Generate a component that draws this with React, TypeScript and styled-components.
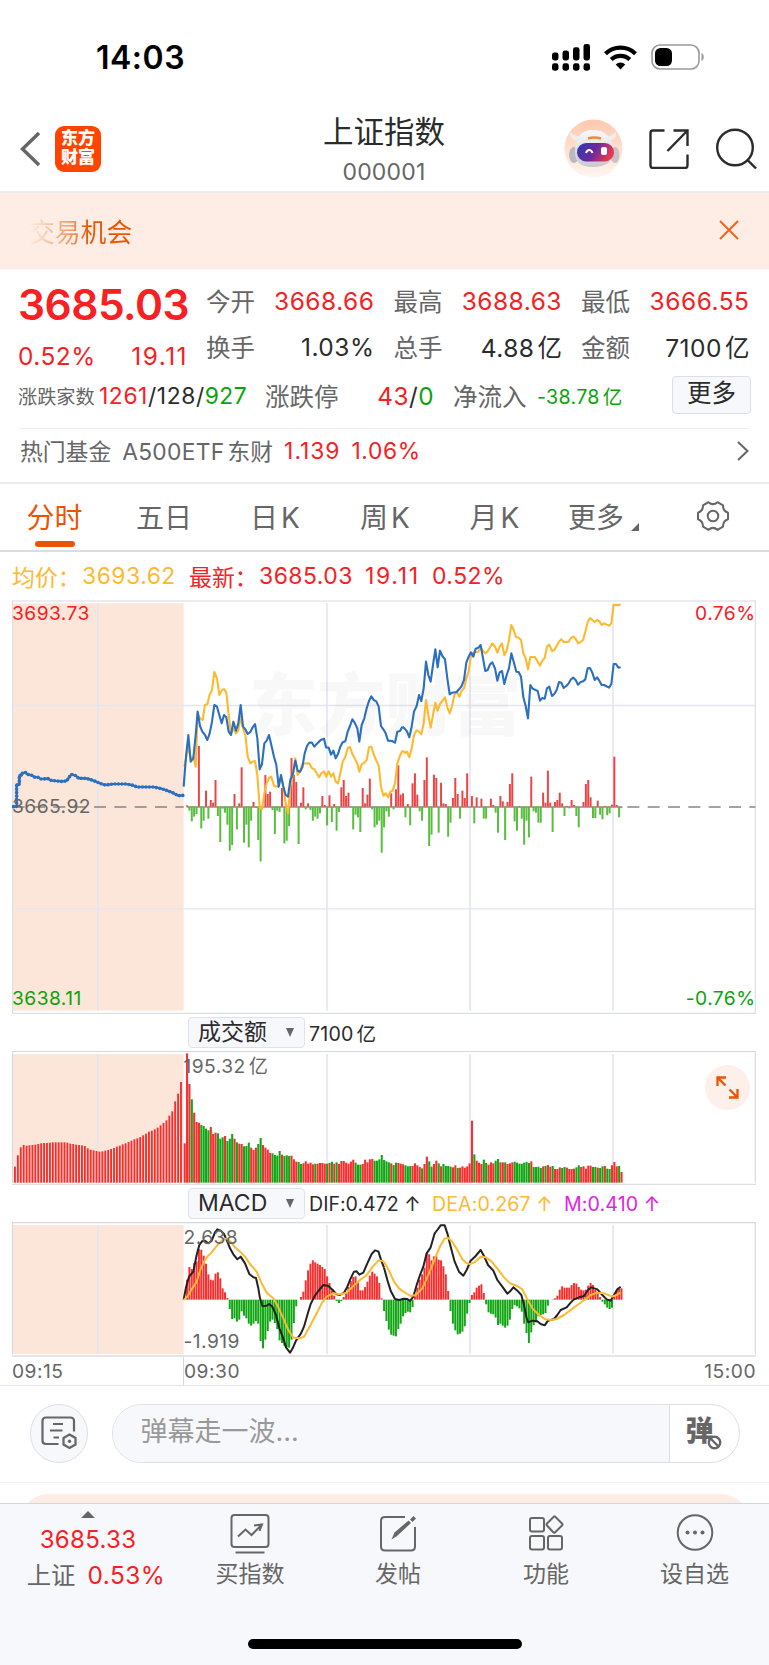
import React from 'react';
import styled, { createGlobalStyle } from 'styled-components';

const RED = '#f72023';
const GREEN = '#0ba30b';
const ORANGE = '#ea5504';
const GOLD = '#ffb92e';
const BLUE = '#2b6fc0';
const INK = '#2b2b2b';
const GREY = '#666';
const LINE = '#e3e6ee';
const PEACH = '#fce6da';

const Global = createGlobalStyle`
  * { box-sizing: border-box; }
  body {
    margin: 0;
    background: #fff;
    color: ${INK};
    font-family: Inter, "Noto Sans CJK SC", sans-serif;
    font-feature-settings: "calt" 0;
  }
`;

/* ---------- chart data: thirds of a pixel ---------- */

const SESSION_X = 551;
const STEP = 7.122;

const flow = [
  4, -12, -44, -30, -22, 182, -65, -42, 48, -36, 20, 12, 80, -28, -106, -6, -18, -54, -132, -115,
  38, -68, 10, 118, -108, -54, -122, -42, 14, -4, -100, -164, 0, 95, 38, 45, -10, -82, -12, -16,
  56, -110, -102, -58, 146, 96, 74, -112, 12, 58, -8, 10, -10, -42, -30, -36, -20, 32, 5, -56,
  34, -46, 8, -72, -16, 58, 80, 32, 42, -2, -68, -24, -32, -76, 56, 10, 36, 84, -8, -62,
  -54, -42, -138, -62, -14, -30, 40, -8, 52, 124, 36, 40, -32, 8, -56, 70, 100, 36, -14, -42,
  80, 148, -118, -84, 96, 86, -78, 72, 10, 8, -90, -48, 26, 86, 38, -36, 48, 26, 100, 0,
  32, -50, 28, 0, 24, -36, -36, 0, 24, 5, -18, -78, 32, 16, -100, 14, 68, 100, -44, -72,
  2, -36, -114, -42, -92, 90, -14, -18, -48, -48, 42, 12, 108, 12, -76, 14, 20, 42, 10, -28,
  2, -5, 20, 5, -28, -62, 0, 14, 68, 80, 28, -34, -34, 18, -24, -38, 2, -26, -20, 6,
  150, 5, -32, -4,
];

const auction = [
  500, 466, 442, 435, 437, 436, 435, 434, 432, 430, 429, 429, 428, 427, 427, 427, 427, 427, 428, 431,
  432, 434, 435, 436, 438, 445, 449, 451, 453, 455, 454, 452, 450, 447, 444, 440, 437, 433, 430, 426,
  422, 418, 415, 411, 406, 401, 395, 392, 388, 383, 376, 369, 361, 347, 334, 304, 281, 246,
];

const turnover = [
  430, 160, 252, -298, 338, 366, 368, -375, -378, -386, -391, 381, 402, 398, -400, -416, -412, 408, -423, -416,
  -402, 416, -427, 431, 432, -439, -438, -428, 443, 450, 443, -432, -414, 435, 443, 449, 459, -460, -465, -467,
  -453, 464, -468, -466, -468, 467, 478, 485, -486, -492, 490, 484, 491, 488, 493, -491, 491, 489, 489, 491,
  -491, 489, -485, 491, -487, 492, 483, 483, 488, 491, 485, 479, -488, -494, -494, 492, 479, 487, 478, 477,
  -482, -482, -478, -465, -480, -484, -487, 490, -495, -488, 489, 491, 493, -496, -499, -498, 498, 490, 496, 501,
  -505, 492, 470, -484, -500, 492, 482, -490, 499, -492, -498, -498, -500, 502, 496, -504, 503, 499, 503, 499,
  490, 362, -463, 482, 488, 492, -479, -489, 494, 487, 490, -482, -477, 487, 487, -487, 492, 490, 487, -485,
  -488, -491, -491, -488, -486, -489, 484, -501, -501, -500, -504, 499, -498, 495, 500, -498, 507, 507, 502, -504,
  -501, 503, 507, 507, 506, -502, -496, 501, 499, 506, 497, 497, -501, -501, 503, -504, -499, 498, -506, -507,
  496, 486, 499, -498, 516,
];

const macd = [
  60, 98, 92, 110, 115, 152, 150, 132, 108, 76, 60, 58, 78, 82, 64, 34, 22, 5, -28, -58,
  -56, -66, -60, -35, -48, -56, -72, -78, -72, -64, -72, -124, -146, -120, -94, -66, -60, -70, -88, -122,
  -130, -138, -142, -144, -120, -70, -20, 0, 8, 24, 58, 88, 108, 118, 112, 108, 104, 98, 92, 70,
  50, 28, 12, -4, -10, -4, 8, 20, 38, 56, 68, 70, 52, 28, 28, 38, 54, 72, 84, 78,
  70, 50, 4, -34, -64, -90, -105, -108, -110, -88, -72, -50, -40, -36, -38, -22, 10, 36, 60, 76,
  96, 140, 136, 118, 130, 132, 120, 118, 100, 76, 26, -34, -72, -92, -104, -102, -96, -80, -42, -10,
  14, 22, 36, 42, 46, 20, -14, -38, -42, -44, -54, -76, -72, -78, -84, -78, -60, -28, -16, -20,
  -26, -36, -72, -100, -130, -98, -76, -68, -50, -46, -44, -40, -18, 0, 1, 4, 12, 30, 40, 36,
  36, 36, 44, 50, 48, 38, 30, 28, 30, 42, 50, 44, 30, 22, 8, -6, -14, -24, -28, -24,
  8, 28, 34, 34,
];

const priceEarly =
  '11,560 18,470 25,405 32,485 40,475 47,405 53,335 60,378 67,395 75,405 82,420 89,400 96,365 103,315 111,320 118,345 125,370 132,345 139,352 146,395 153,405 160,365 168,392 175,370 182,315 189,380 196,388 203,402 211,396 218,382 225,372 232,415 239,508 246,492 253,430 260,422 267,405 274,435 282,470 289,495 296,560 303,525 310,560 317,585 324,590 331,540 339,520 346,482 353,512 360,515 367,502 374,460 381,438 388,428 396,428 403,440 410,432 417,425 424,419 432,416 438,442 446,443 453,464 460,452 467,475 474,462 481,440 488,427 496,424 503,395 510,378 517,358 524,368 532,385 538,425 545,375 553,355 560,325 567,303 574,289 581,300 589,304 596,320 603,378 610,388 617,400 624,422 636,423 645,428 652,395 660,393 667,380';
const priceLate =
  '7,380 14,386 21,394 28,412 35,380 42,335 50,318 57,285 64,303 71,265 78,185 85,225 92,245 99,195 106,148 113,202 120,152 127,168 135,178 142,235 149,283 156,278 170,276 184,260 192,240 199,188 206,170 213,157 220,170 227,146 235,143 242,135 249,175 256,213 263,210 270,193 277,187 285,205 292,242 299,217 306,213 313,252 320,225 327,205 334,160 341,185 349,215 356,216 363,230 370,292 377,318 384,355 391,255 398,266 413,273 420,302 427,294 434,296 441,265 448,260 456,288 463,282 470,270 477,246 484,248 491,264 499,258 506,250 513,238 520,233 527,240 534,254 541,247 549,244 556,238 563,205 570,204 577,218 584,240 591,232 598,242 605,255 612,255 627,263 634,252 641,192 648,192 655,203 662,202';
const averageEarly =
  '13,500 25,440 32,475 40,470 47,500 53,340 60,355 68,360 75,314 82,313 89,284 96,270 103,216 111,235 118,285 125,272 132,267 139,278 146,345 153,400 160,385 168,400 175,392 182,350 189,385 196,405 203,470 211,490 218,485 225,483 232,525 239,622 246,628 253,580 260,550 267,534 274,530 282,558 296,560 303,530 310,560 317,610 324,640 331,560 339,520 346,475 353,525 360,515 367,492 381,490 388,490 396,505 403,508 410,520 417,532 424,520 432,514 439,530 446,514 453,530 460,520 467,545 474,550 481,520 488,485 496,470 503,444 510,441 517,462 524,475 532,492 538,515 545,493 553,488 560,480 567,442 574,440 581,462 589,482 596,497 603,560 610,587 617,580 624,592 631,575 638,572 645,550 652,490 660,467 667,452';
const averageLate =
  '7,452 14,458 21,455 28,472 35,445 42,405 50,391 57,395 64,403 71,370 78,300 85,345 92,383 99,345 106,308 113,332 120,312 127,303 135,292 142,322 149,340 156,318 163,285 170,275 178,290 185,272 192,265 199,235 206,215 213,165 220,158 235,155 242,145 256,160 263,154 277,130 285,140 292,158 299,140 306,130 313,166 320,152 327,120 334,75 341,90 348,111 356,113 363,120 370,160 377,175 384,208 391,171 405,171 420,197 427,182 434,174 441,140 448,134 456,153 463,150 477,125 484,118 491,126 505,126 513,114 520,110 527,116 534,130 541,127 549,120 556,95 563,67 570,54 577,60 584,66 591,60 598,64 605,75 612,70 627,77 634,70 641,15 648,14 655,16 662,13';
const auctionLine =
  '40,755 50,755 50,688 58,688 58,661 66,661 67,655 76,652 82,658 96,661 102,666 115,667 122,672 145,671 152,676 170,678 185,679 200,678 206,668 214,658 228,662 236,670 258,670 272,674 286,679 300,685 315,690 340,687 378,687 400,691 410,696 460,696 480,700 500,706 520,714 534,722 551,721';
const difEarly =
  '551,899 558,862 567,830 580,815 590,765 598,735 606,724 614,722 625,730 635,722 645,697 652,688 662,692 672,702 681,722 690,745 700,763 712,778 722,770 735,790 748,822 760,832 768,834 775,865 780,895 787,918 800,917 808,912 817,920 828,945 838,985 848,1010 858,1042 870,1058 878,1045 888,1022 903,1000 912,980 922,945 932,912 943,890 955,873 970,855 985,858 998,870 1010,883 1020,885 1032,878 1042,860 1052,835 1062,815 1070,814 1078,824 1090,818 1102,790 1115,762 1125,751 1135,754 1145,785 1152,803';
const difLate =
  '0,803 10,840 20,872 33,897 45,900 60,896 70,897 78,903 88,890 98,855 108,825 118,800 128,760 140,742 152,700 160,690 170,676 182,676 190,700 200,740 212,785 225,815 238,827 248,810 260,782 275,768 290,750 300,768 312,795 328,812 340,840 355,860 370,881 380,872 388,862 400,872 412,885 420,915 428,955 433,967 445,962 460,964 470,972 482,976 492,962 510,957 520,945 530,930 548,922 560,908 570,898 585,892 600,888 612,870 622,862 640,868 655,885 668,898 680,902 690,885 700,868 710,860';
const deaEarly =
  '551,899 562,890 575,868 590,845 600,812 612,785 622,770 635,757 650,738 665,722 680,715 692,725 705,742 720,755 735,770 750,792 770,815 785,850 800,878 820,895 835,922 850,955 865,990 880,1013 900,1015 912,1010 930,978 950,940 965,910 980,890 1000,880 1020,883 1040,878 1060,858 1080,840 1100,825 1118,800 1135,782 1145,782 1152,785';
const deaLate =
  '0,785 15,812 30,845 45,865 60,876 80,888 95,885 115,865 135,820 155,770 170,735 182,716 192,713 205,725 220,750 235,778 248,790 258,792 272,787 290,770 305,772 320,782 340,805 360,832 378,850 400,858 415,868 430,898 445,925 465,945 485,958 500,960 518,957 540,945 560,930 580,915 602,900 620,885 640,878 660,880 685,890 700,884 710,877';

/* ---------- frame ---------- */

const Page = styled.div`
  width: 769px;
  height: 1665px;
  display: flex;
  flex-direction: column;
  overflow: hidden;
  background: #fff;
`;

const StatusBar = styled.div`
  height: 106px;
  padding: 8px 64px 0 96px;
  display: flex;
  align-items: center;
  justify-content: space-between;
`;
const Clock = styled.div`
  font-size: 32px;
  font-weight: 600;
  color: #000;
  letter-spacing: 0.5px;
`;
const StatusIcons = styled.div`
  display: flex;
  align-items: center;
  gap: 14px;
`;

const TitleBar = styled.header`
  height: 87px;
  border-bottom: 2px solid #ececef;
  display: grid;
  grid-template-columns: 285px 198px 1fr;
`;
const TitleLeft = styled.div`
  display: flex;
  align-items: center;
  gap: 15px;
  padding: 0 0 2px 20px;
`;
const Logo = styled.div`
  width: 46px;
  height: 46px;
  border-radius: 9px;
  background: #ff4400;
  color: #fff;
  font-size: 17px;
  line-height: 19px;
  font-weight: 900;
  padding-top: 3px;
  text-align: center;
`;
const TitleText = styled.div`
  display: flex;
  flex-direction: column;
  align-items: center;
  padding-top: 6px;
`;
const Name = styled.div`
  font-size: 30.5px;
  line-height: 40px;
  white-space: nowrap;
`;
const Code = styled.div`
  font-size: 23px;
  line-height: 41px;
  color: ${GREY};
  letter-spacing: 0.2px;
`;
const TitleRight = styled.div`
  display: flex;
  align-items: center;
  padding: 0 0 2px 81px;
  gap: 26px;
`;

const Banner = styled.div`
  height: 76px;
  background: #fdede4;
  display: flex;
  align-items: center;
  justify-content: space-between;
  padding: 0 30px 2px 29px;
`;
const BannerText = styled.div`
  font-size: 25.8px;
  background: linear-gradient(90deg, #fdede4 0, #f0935c 45px, ${ORANGE} 60px);
  background-clip: text;
  -webkit-background-clip: text;
  color: transparent;
`;

/* ---------- quote ---------- */

const Quote = styled.section`
  height: 215px;
  border-bottom: 2px solid #ececef;
  padding: 0 18px;
`;
const QuoteTop = styled.div`
  display: flex;
  height: 103px;
`;
const Last = styled.div`
  width: 188px;
  color: ${RED};
`;
const LastPrice = styled.div`
  font-size: 42.5px;
  font-weight: 600;
  line-height: 52px;
  letter-spacing: -0.5px;
  padding-top: 10px;
`;
const LastChange = styled.div`
  display: flex;
  justify-content: space-between;
  width: 170px;
  font-size: 24.4px;
  line-height: 38px;
  padding-top: 6px;
`;
const Stats = styled.div`
  flex: 1;
  display: grid;
  grid-template-columns: repeat(3, 168.5px);
  grid-template-rows: 46px 46px;
  column-gap: 19px;
  padding-top: 8.5px;
`;
const Stat = styled.div`
  display: flex;
  justify-content: space-between;
  align-items: center;
  font-size: 24.5px;
  white-space: nowrap;
`;
const Label = styled.span<{ $size?: number }>`
  color: ${GREY};
  font-size: ${(p) => p.$size ?? 24.5}px;
  white-space: nowrap;
`;
const Num = styled.span<{ $tone?: string; $size?: number; $track?: number }>`
  color: ${(p) => p.$tone ?? INK};
  ${(p) => (p.$size ? `font-size: ${p.$size}px;` : '')}
  letter-spacing: ${(p) => p.$track ?? 0.5}px;
  white-space: nowrap;
`;
const Unit = styled.span`
  margin-left: 3px;
  letter-spacing: 0;
`;
const Breadth = styled.div`
  height: 56px;
  padding-bottom: 9px;
  display: flex;
  align-items: center;
  white-space: nowrap;
`;
const Slot = styled.div<{ $w: number; $end?: boolean }>`
  width: ${(p) => p.$w}px;
  flex: none;
  display: flex;
  align-items: center;
  justify-content: ${(p) => (p.$end ? 'flex-end' : 'flex-start')};
`;
const MoreButton = styled.button`
  width: 79px;
  height: 38px;
  margin: 0 0 2px auto;
  padding: 0 0 3px;
  border: 1.5px solid #dcdfe6;
  border-radius: 4px;
  background: #f7f8fb;
  color: ${INK};
  font: inherit;
  font-size: 24.5px;
  line-height: 30px;
`;
const Fund = styled.div`
  height: 54px;
  margin: 0 2px;
  padding-bottom: 10px;
  border-top: 1.5px solid #efefef;
  display: flex;
  align-items: center;
  gap: 11px;
  font-size: 22.8px;
  color: ${GREY};
  svg { margin-left: auto; }
`;

/* ---------- tabs ---------- */

const Tabs = styled.nav`
  height: 68px;
  border-bottom: 2px solid #dadce3;
  display: grid;
  grid-template-columns: 109px 110px 112px 108px 111px 107px 112px;
`;
const Tab = styled.div<{ $on?: boolean }>`
  position: relative;
  display: flex;
  align-items: center;
  justify-content: center;
  gap: 7px;
  padding-bottom: 3px;
  font-size: 28px;
  color: ${(p) => (p.$on ? ORANGE : GREY)};
  &::after {
    content: "";
    display: ${(p) => (p.$on ? 'block' : 'none')};
    position: absolute;
    bottom: 3px;
    left: 35px;
    width: 40px;
    height: 6px;
    border-radius: 3px;
    background: ${ORANGE};
  }
`;
const Corner = styled.i`
  align-self: flex-end;
  margin-bottom: 16px;
  border-style: solid;
  border-width: 0 0 8px 8px;
  border-color: transparent transparent ${GREY};
`;

/* ---------- charts ---------- */

const Legend = styled.div`
  height: 47px;
  padding: 0 0 0 12px;
  display: flex;
  align-items: center;
  font-size: 22.9px;
`;
const Panel = styled.div<{ $h: number }>`
  position: relative;
  width: 744px;
  height: ${(p) => p.$h}px;
  margin-left: 12px;
  flex: none;
  svg { display: block; }
`;
const Mark = styled.span<{ $x?: number; $y: number; $tone?: string }>`
  position: absolute;
  top: ${(p) => p.$y}px;
  ${(p) => (p.$x === undefined ? 'right: 0.5px;' : `left: ${p.$x}px;`)}
  color: ${(p) => p.$tone ?? GREY};
  font-size: 19.2px;
  line-height: 22px;
  letter-spacing: 0.45px;
  white-space: nowrap;
`;
const Indicator = styled.div<{ $h: number }>`
  height: ${(p) => p.$h}px;
  flex: none;
  padding-left: 188px;
  display: flex;
  align-items: center;
  font-size: 19.6px;
`;
const Picker = styled.div`
  width: 116.5px;
  height: 31px;
  margin-right: 4.5px;
  padding: 0 10px 1px 9px;
  border: 1.5px solid #dfe2e9;
  border-radius: 4px;
  background: #f7f8fb;
  display: flex;
  align-items: center;
  justify-content: space-between;
  font-size: 23px;
  line-height: 28px;
  &::after {
    content: "";
    border-style: solid;
    border-width: 9px 4.5px 0;
    border-color: ${GREY} transparent transparent;
  }
`;
const Expand = styled.div`
  position: absolute;
  top: 14px;
  right: 6px;
  width: 45px;
  height: 45px;
  border-radius: 50%;
  background: #fdf0ea;
  display: flex;
  align-items: center;
  justify-content: center;
`;
const Times = styled.div`
  height: 28.5px;
  flex: none;
  padding: 0 13px 0 12px;
  border-bottom: 1.5px solid #e1e3e8;
  display: flex;
  font-size: 19.2px;
  line-height: 29px;
  letter-spacing: 0.5px;
  color: ${GREY};
`;
const Opening = styled.div`
  width: 171px;
`;
const Session = styled.div`
  flex: 1;
  border-left: 1.5px solid #d5d8df;
  display: flex;
  justify-content: space-between;
`;

/* ---------- comment and bottom ---------- */

const Comment = styled.div`
  height: 97.5px;
  flex: none;
  border-bottom: 1.5px solid #f4f4f5;
  padding: 18.5px 29.5px 0 29.5px;
  display: flex;
  gap: 23.5px;
`;
const Round = styled.div`
  width: 58.5px;
  height: 58.5px;
  border-radius: 50%;
  border: 1.5px solid #dcdfe6;
  background: #f7f8fb;
  display: flex;
  align-items: center;
  justify-content: center;
`;
const Pill = styled.div`
  flex: 1;
  height: 58.5px;
  border: 1.5px solid #dcdfe6;
  border-radius: 30px;
  overflow: hidden;
  display: flex;
`;
const Field = styled.div`
  flex: 1;
  padding: 0 0 8px 28px;
  background: #f7f8fb;
  color: #999;
  font-size: 27px;
  display: flex;
  align-items: center;
`;
const Barrage = styled.div`
  position: relative;
  width: 70px;
  border-left: 1.5px solid #dcdfe6;
  color: ${GREY};
  font-size: 28px;
  font-weight: 900;
  line-height: 52px;
  padding-left: 16px;
  svg { position: absolute; left: 37px; top: 30px; }
`;
const Peek = styled.div`
  height: 19.5px;
  flex: none;
  padding: 10.5px 20px 0;
  overflow: hidden;
`;
const PeekCard = styled.div`
  height: 60px;
  border-radius: 28px;
  background: #fdede4;
`;
const BottomBar = styled.footer`
  flex: 1;
  border-top: 1.5px solid #d3d6df;
  background: #f7f8fb;
  display: flex;
  flex-direction: column;
`;
const BottomItems = styled.div`
  height: 136px;
  display: grid;
  grid-template-columns: 176px 148px 148px 148px 149px;
`;
const BottomItem = styled.div`
  display: flex;
  flex-direction: column;
  align-items: center;
  padding-top: 9px;
  color: ${GREY};
  font-size: 23px;
  line-height: 30px;
  gap: 5px;
  svg { display: block; }
`;
const IndexItem = styled.div`
  display: flex;
  flex-direction: column;
  align-items: center;
  padding: 7.5px 0 0 16px;
  font-size: 24px;
  line-height: 34.5px;
`;
const Up = styled.i`
  margin: 0 16px 5px 0;
  border-style: solid;
  border-width: 0 7px 7px;
  border-color: transparent transparent ${GREY};
`;
const IndexValue = styled.div`
  color: ${RED};
  margin-right: 16px;
  letter-spacing: 0.3px;
`;
const IndexName = styled.div`
  display: flex;
  gap: 12px;
  font-size: 24.4px;
  color: ${GREY};
`;
const HomeBar = styled.div`
  width: 274px;
  height: 10px;
  margin: -1px auto 0;
  border-radius: 5px;
  background: #000;
`;

/* ---------- drawings ---------- */

const Robot = () => (
  <svg width="59" height="59" viewBox="0 0 59 59">
    <defs>
      <linearGradient id="halo" x1="0" y1="0" x2="0" y2="1">
        <stop offset="0" stopColor="#ffc8ad" />
        <stop offset="1" stopColor="#fff6f1" />
      </linearGradient>
      <linearGradient id="visor" x1="0" y1="0" x2="1" y2="0.3">
        <stop offset="0" stopColor="#2b3bb0" />
        <stop offset="0.55" stopColor="#6a2aa0" />
        <stop offset="1" stopColor="#e8384f" />
      </linearGradient>
      <linearGradient id="shell" x1="0" y1="0" x2="0" y2="1">
        <stop offset="0" stopColor="#fafafa" />
        <stop offset="1" stopColor="#c9c9d0" />
      </linearGradient>
    </defs>
    <circle cx="29.5" cy="29.5" r="29" fill="url(#halo)" />
    <path d="M6 13c0 6 3 9 10 9l3-5c-6 1-10 0-13-4zM52 12c1 6-2 9-8 10l-4-5c6 1 10-1 12-5z" fill="#f1eeee" />
    <ellipse cx="10" cy="36" rx="5" ry="8" fill="#b9b9c0" />
    <ellipse cx="51" cy="36" rx="4.5" ry="8" fill="#c6c3c8" />
    <path d="M11 32c0-14 7-21 18-21s20 7 20 21c0 11-7 16-20 16s-18-5-18-16z" fill="url(#shell)" />
    <path d="M24 19.500q6-2 13 0" stroke="#f08a35" strokeWidth="2.600" fill="none" />
    <rect x="13" y="24" width="37" height="18.500" rx="9.200" fill="url(#visor)" />
    <path d="M22 34c1.500-4 5-4 6.500 0" stroke="#fff" strokeWidth="2" fill="none" />
    <rect x="37" y="28" width="6" height="8" rx="2" fill="#fff" />
  </svg>
);

const CellBars = () => (
  <svg width="38" height="27" viewBox="0 0 38 27" fill="#000">
    {[0, 10.5, 21, 31.5].map((x, i) => (
      <g key={x}>
        <rect x={x} y={[8.5, 6.5, 3.2, 0][i]} width="6.500" height={[8, 10, 13.3, 16.5][i]} rx="2.400" />
        <rect x={x} y="19.300" width="6.500" height="7.400" rx="2.400" />
      </g>
    ))}
  </svg>
);

const Wifi = () => (
  <svg width="33" height="25" viewBox="0 0 33 25" fill="none" stroke="#000">
    <path d="M1.500 8.800a21.500 21.500 0 0 1 30 0" strokeWidth="4.300" />
    <path d="M7.200 14.600a13.300 13.300 0 0 1 18.600 0" strokeWidth="4.200" />
    <path d="M11.700 19.600a6.800 6.800 0 0 1 9.600 0L16.500 24.500z" fill="#000" stroke="none" />
  </svg>
);

const Battery = () => (
  <svg width="54" height="26" viewBox="0 0 54 26">
    <rect x="1" y="1" width="47" height="24" rx="8" fill="none" stroke="#999" strokeWidth="1.600" />
    <path d="M50.500 9v8c3-1 3-7 0-8z" fill="#999" />
    <rect x="4" y="4" width="17" height="18" rx="5.500" fill="#000" />
  </svg>
);

const Grid = ({ top, bottom }: { top: number; bottom: number }) => (
  <>
    <rect x="38" y={top} width="513" height={bottom - top} fill={PEACH} />
    <path d={`M293.500 ${top}V${bottom}M981 ${top}V${bottom}M1410 ${top}V${bottom}M1839 ${top}V${bottom}`} stroke={LINE} strokeWidth="5" />
  </>
);

const Histogram = ({ values, base, from = 1, up, down }: { values: number[]; base: number; from?: number; up: string; down: string }) => (
  <>
    {values.map((v, i) => (
      <rect
        key={i}
        x={SESSION_X + STEP * (i + from)}
        y={v > 0 ? base - v : base}
        width="5.900"
        height={Math.abs(v)}
        fill={v > 0 ? up : down}
      />
    ))}
  </>
);

const PriceChart = () => (
  <Panel $h={415}>
    <svg width="744" height="415" viewBox="36 1797 2232 1245" fill="none">
      <Grid top={1810} bottom={3032} />
      <path d="M36 2116.500H2266M36 2726.500H2266" stroke={LINE} strokeWidth="4" />
      <path d="M36 1803H2268" stroke="#ececef" strokeWidth="6" />
      <path d="M37.500 1803V3040M2266 1803V3040M36 3040H2268" stroke="#dcdfe6" strokeWidth="3.500" />
      <text x="748" y="2190" fontSize="204" fontWeight="900" fill="#777" fillOpacity="0.055" fontFamily="'Noto Sans CJK SC', sans-serif">东方财富</text>
      <path d="M38 2421H551M1882 2421H2266" stroke="#858585" strokeWidth="5" strokeDasharray="36 25" />
      <path d="M560 2421H1866" stroke="#8c8c8c" strokeWidth="4" />
      <Histogram values={flow} base={2420} up="#ec4444" down="#57bd3c" />
      <g stroke={GOLD} strokeWidth="6.300" strokeLinejoin="round">
        <polyline points={averageEarly} transform="translate(540 1800)" />
        <polyline points={averageLate} transform="translate(1200 1800)" />
      </g>
      <g stroke={BLUE} strokeWidth="6.300" strokeLinejoin="round">
        <polyline points={priceEarly} transform="translate(540 1800)" />
        <polyline points={priceLate} transform="translate(1200 1800)" />
        <polyline points={auctionLine} transform="translate(0 1665)" />
        <polyline points={auctionLine} transform="translate(0 1665)" strokeWidth="11" strokeLinecap="round" strokeDasharray="0 10.500" />
      </g>
    </svg>
    <Mark $x={0} $y={3} $tone={RED}>3693.73</Mark>
    <Mark $y={3} $tone={RED}>0.76%</Mark>
    <Mark $x={0} $y={196}>3665.92</Mark>
    <Mark $x={0} $y={388} $tone={GREEN}>3638.11</Mark>
    <Mark $y={388} $tone={GREEN}>-0.76%</Mark>
  </Panel>
);

const TurnoverChart = () => (
  <Panel $h={134}>
    <svg width="744" height="134" viewBox="36 3153 2232 402" fill="none">
      <Grid top={3162} bottom={3548} />
      <path d="M37.500 3154V3548M2266 3154V3548M36 3154.500H2268" stroke="#d5d8df" strokeWidth="3.500" />
      <path d="M36 3553H2268" stroke="#dcdfe6" strokeWidth="3.500" />
      {auction.map((top, i) => (
        <rect key={i} x={42 + i * 8.74} y={3000 + top} width="5.600" height={548 - top} fill="#f92d2d" />
      ))}
      {turnover.map((v, i) => (
        <rect
          key={i}
          x={SESSION_X + STEP * i}
          y={3000 + Math.abs(v)}
          width="6.200"
          height={548 - Math.abs(v)}
          fill={v > 0 ? '#f92d2d' : '#0fa612'}
        />
      ))}
    </svg>
    <Mark $x={171.5} $y={4}>195.32<Unit>亿</Unit></Mark>
    <Expand>
      <svg width="23" height="23" viewBox="0 0 23 23" fill="none" stroke={ORANGE} strokeWidth="2.300">
        <path d="M10 1.500H1.500V10M1.500 1.500L9.500 9.500M13 21.500h8.500V13M21.500 21.500l-8-8" />
      </svg>
    </Expand>
  </Panel>
);

const MacdChart = () => (
  <Panel $h={135}>
    <svg width="744" height="135" viewBox="36 3666 2232 405" fill="none">
      <Grid top={3675} bottom={4062} />
      <path d="M37.500 3667V4062M2266 3667V4062M36 3668H2268" stroke="#d5d8df" strokeWidth="3.500" />
      <path d="M36 4068H2268" stroke="#dadde4" strokeWidth="4.500" />
      <Histogram values={macd} base={3899} up="#f92d2d" down="#0fa612" />
      <g stroke="#222" strokeWidth="6" strokeLinejoin="round">
        <polyline points={difEarly} transform="translate(0 3000)" />
        <polyline points={difLate} transform="translate(1152 3000)" />
      </g>
      <g stroke={GOLD} strokeWidth="6" strokeLinejoin="round">
        <polyline points={deaEarly} transform="translate(0 3000)" />
        <polyline points={deaLate} transform="translate(1152 3000)" />
      </g>
    </svg>
    <Mark $x={171.5} $y={4}>2.638</Mark>
    <Mark $x={171.5} $y={108}>-1.919</Mark>
  </Panel>
);

const stats: [string, string, string, string?][] = [
  ['今开', '3668.66', RED],
  ['最高', '3688.63', RED],
  ['最低', '3666.55', RED],
  ['换手', '1.03%', INK],
  ['总手', '4.88', INK, '亿'],
  ['金额', '7100', INK, '亿'],
];

export default function App() {
  return (
    <Page>
      <Global />
      <StatusBar>
        <Clock>14:03</Clock>
        <StatusIcons>
          <CellBars />
          <Wifi />
          <Battery />
        </StatusIcons>
      </StatusBar>
      <TitleBar>
        <TitleLeft>
          <svg width="20" height="36" viewBox="0 0 20 36" fill="none" stroke={GREY} strokeWidth="3.400">
            <path d="M19 2L2.500 18L19 34" />
          </svg>
          <Logo>东方<br />财富</Logo>
        </TitleLeft>
        <TitleText>
          <Name>上证指数</Name>
          <Code>000001</Code>
        </TitleText>
        <TitleRight>
          <Robot />
          <svg width="40" height="40" viewBox="0 0 40 40" fill="none" stroke={INK} strokeWidth="2.400">
            <path d="M15.500 1.500H4Q1.500 1.500 1.500 4V36.500Q1.500 39 4 39H36Q38.500 39 38.500 36.500V25.500M24.500 1.500H38.500V17M38.500 1.500L18.500 22" />
          </svg>
          <svg width="42" height="42" viewBox="0 0 42 42" fill="none" stroke={INK} strokeWidth="2.400">
            <circle cx="20" cy="19.500" r="17.800" />
            <path d="M32 31.500L41 40.500" />
          </svg>
        </TitleRight>
      </TitleBar>
      <Banner>
        <BannerText>交易机会</BannerText>
        <svg width="20" height="20" viewBox="0 0 20 20" stroke="#f0641c" strokeWidth="2">
          <path d="M1 1L19 19M19 1L1 19" />
        </svg>
      </Banner>
      <Quote>
        <QuoteTop>
          <Last>
            <LastPrice>3685.03</LastPrice>
            <LastChange>
              <Num $tone={RED}>0.52%</Num>
              <Num $tone={RED} $track={1.5}>19.11</Num>
            </LastChange>
          </Last>
          <Stats>
            {stats.map(([label, value, tone, unit]) => (
              <Stat key={label}>
                <Label>{label}</Label>
                <Num $tone={tone}>{value}{unit && <Unit>{unit}</Unit>}</Num>
              </Stat>
            ))}
          </Stats>
        </QuoteTop>
        <Breadth>
          <Slot $w={81}><Label $size={19.2}>涨跌家数</Label></Slot>
          <Slot $w={166}>
            <Num $size={22.8} $tone={RED} $track={0.6}>1261</Num>
            <Num $size={22.8} $track={0.6}>/128/</Num>
            <Num $size={22.8} $tone={GREEN}>927</Num>
          </Slot>
          <Slot $w={76}><Label>涨跌停</Label></Slot>
          <Slot $w={93} $end>
            <Num $size={24.3} $tone={RED}>43</Num><Num $size={24.3}>/</Num><Num $size={24.3} $tone={GREEN}>0</Num>
          </Slot>
          <Slot $w={19} />
          <Slot $w={84}><Label>净流入</Label></Slot>
          <Num $size={19.6} $tone={GREEN} $track={0.3}>-38.78<Unit>亿</Unit></Num>
          <MoreButton>更多</MoreButton>
        </Breadth>
        <Fund>
          <span>热门基金</span>
          <Num $tone={GREY} $track={0.3}>A500ETF<Unit>东财</Unit></Num>
          <Num $tone={RED} $track={1}>1.139</Num>
          <Num $tone={RED} $track={0.6}>1.06%</Num>
          <svg width="12" height="20" viewBox="0 0 12 20" fill="none" stroke={GREY} strokeWidth="2">
            <path d="M1 1L10.500 10L1 19" />
          </svg>
        </Fund>
      </Quote>
      <Tabs>
        <Tab $on>分时</Tab>
        <Tab>五日</Tab>
        <Tab><span>日<Unit>K</Unit></span></Tab>
        <Tab><span>周<Unit>K</Unit></span></Tab>
        <Tab><span>月<Unit>K</Unit></span></Tab>
        <Tab>更多<Corner /></Tab>
        <Tab>
          <svg width="32" height="30" viewBox="0 0 32 30" fill="none" stroke={GREY} strokeWidth="2" strokeLinejoin="round">
            <path d="M11.500 1.200Q16 5 20.500 1.200L26 4.400Q25.800 10 31 11.800V18.200Q25.800 20 26 25.600L20.500 28.800Q16 25 11.500 28.800L6 25.600Q6.200 20 1 18.200V11.800Q6.200 10 6 4.400Z" />
            <circle cx="16" cy="15" r="5.300" />
          </svg>
        </Tab>
      </Tabs>
      <Legend>
        <Slot $w={70}><Num $tone={GOLD} $track={0}>均价：</Num></Slot>
        <Slot $w={107}><Num $tone={GOLD}>3693.62</Num></Slot>
        <Slot $w={70}><Num $tone={RED} $track={0}>最新：</Num></Slot>
        <Slot $w={106}><Num $tone={RED}>3685.03</Num></Slot>
        <Slot $w={67}><Num $tone={RED} $track={1.7}>19.11</Num></Slot>
        <Num $tone={RED}>0.52%</Num>
      </Legend>
      <PriceChart />
      <Indicator $h={37}>
        <Picker>成交额</Picker>
        <Num $track={0.2}>7100<Unit>亿</Unit></Num>
      </Indicator>
      <TurnoverChart />
      <Indicator $h={37}>
        <Picker>MACD</Picker>
        <Slot $w={123}><Num $track={0}>DIF:0.472 ↑</Num></Slot>
        <Slot $w={132}><Num $tone={GOLD} $track={0.1}>DEA:0.267 ↑</Num></Slot>
        <Num $tone="#e01fe6" $track={0.1}>M:0.410 ↑</Num>
      </Indicator>
      <MacdChart />
      <Times>
        <Opening>09:15</Opening>
        <Session><span>09:30</span><span>15:00</span></Session>
      </Times>
      <Comment>
        <Round>
          <svg width="36" height="34" viewBox="0 0 36 34" fill="none" stroke={GREY} strokeWidth="2.200">
            <path d="M17.500 28H5Q1.500 28 1.500 24.500V5Q1.500 1.500 5 1.500H29Q33 1.500 33 5V15.500M12 8H22M9 14.500H21.500M12.500 21.500H18" />
            <path d="M28.500 18.500l6 3.500v6.500l-6 3.500l-6-3.500v-6.500z" />
            <circle cx="28.500" cy="25.300" r="1.700" fill={GREY} stroke="none" />
          </svg>
        </Round>
        <Pill>
          <Field>弹幕走一波...</Field>
          <Barrage>
            弹
            <svg width="15" height="15" viewBox="0 0 15 15" stroke={GREY} strokeWidth="2.400" fill="#fff">
              <circle cx="7.500" cy="7.500" r="5.700" />
              <path d="M3.500 3.500l8 8" />
            </svg>
          </Barrage>
        </Pill>
      </Comment>
      <Peek><PeekCard /></Peek>
      <BottomBar>
        <BottomItems>
          <IndexItem>
            <Up />
            <IndexValue>3685.33</IndexValue>
            <IndexName>上证<Num $tone={RED}>0.53%</Num></IndexName>
          </IndexItem>
          <BottomItem>
            <svg width="40" height="41" viewBox="0 0 40 41" fill="none" stroke={GREY} strokeWidth="2">
              <rect x="1.500" y="2" width="37" height="32" rx="3" />
              <path d="M5.500 39.500H34.500M8 23.500L15.500 16.500L21.500 22L31 12.500M24 12.500L32 11.500L29.500 18" />
            </svg>
            买指数
          </BottomItem>
          <BottomItem>
            <svg width="38" height="41" viewBox="0 0 38 41" fill="none" stroke={GREY} strokeWidth="2">
              <path d="M26 4H6Q2 4 2 8V33.500Q2 37.500 6 37.500H32Q36 37.500 36 33.500V14" />
              <path d="M12.500 26.500L15.500 19.500L29.500 7.500L32 10L18 23Z" fill={GREY} stroke="none" />
              <path d="M31 6.500L34.500 3L37 5.500L33.500 9Z" fill={GREY} stroke="none" />
            </svg>
            发帖
          </BottomItem>
          <BottomItem>
            <svg width="36" height="41" viewBox="0 0 36 41" fill="none" stroke={GREY} strokeWidth="2">
              <rect x="2" y="5" width="14" height="13.500" rx="2" />
              <rect x="2" y="23" width="14" height="13.500" rx="2" />
              <rect x="20" y="23" width="14" height="13.500" rx="2" />
              <path d="M27 3.500L34 10.500Q35 11.500 34 12.500L27 19.500Q26 20 25 19L19 12.500Q18 11.500 19 10.500L26 3.500Q26.500 3 27 3.500Z" />
            </svg>
            功能
          </BottomItem>
          <BottomItem>
            <svg width="38" height="41" viewBox="0 0 38 41" fill="none" stroke={GREY} strokeWidth="2">
              <circle cx="19" cy="19.500" r="17.300" />
              <g fill={GREY} stroke="none">
                <circle cx="11.500" cy="19.500" r="2" /><circle cx="19" cy="19.500" r="2" /><circle cx="26.500" cy="19.500" r="2" />
              </g>
            </svg>
            设自选
          </BottomItem>
        </BottomItems>
        <HomeBar />
      </BottomBar>
    </Page>
  );
}
